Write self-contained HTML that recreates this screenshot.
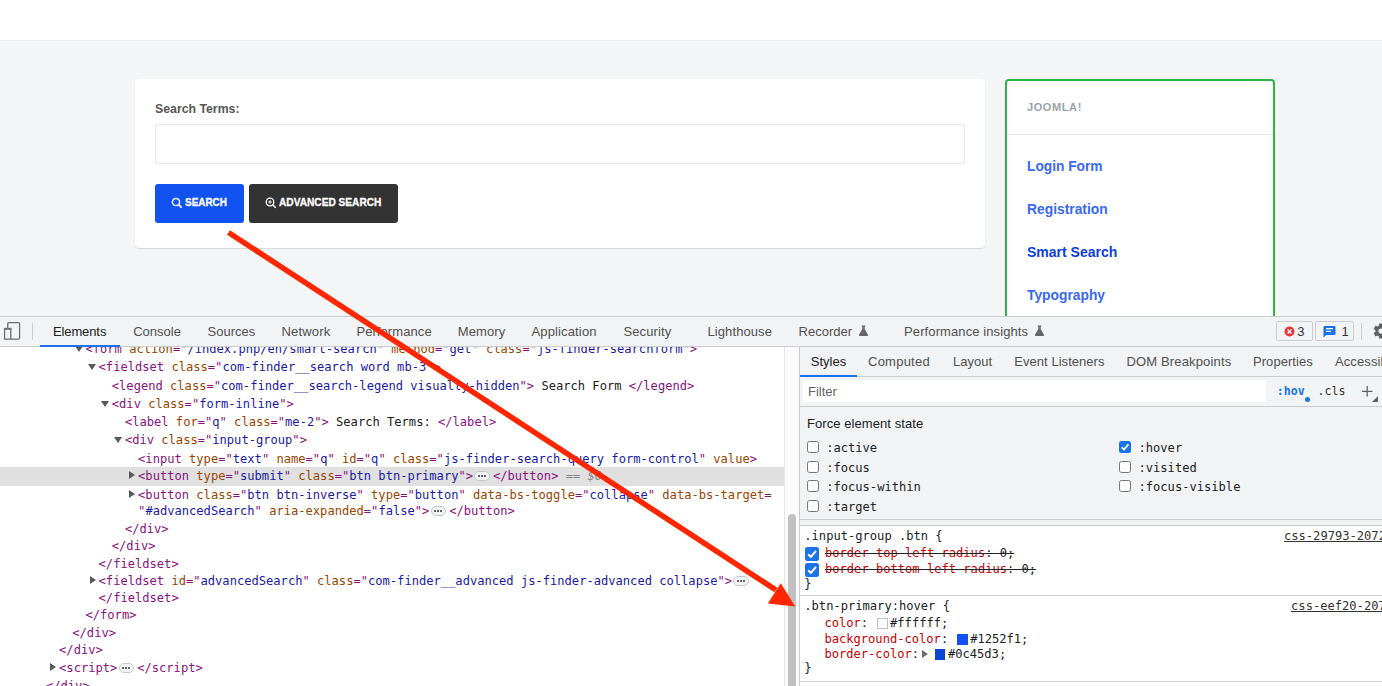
<!DOCTYPE html>
<html lang="en">
<head>
<meta charset="utf-8">
<title>Smart Search</title>
<style>
*{box-sizing:border-box;margin:0;padding:0}
html,body{width:1382px;height:686px;overflow:hidden;background:#f4f5f7;font-family:"Liberation Sans",Arial,sans-serif}
.abs{position:absolute}
#hdr{left:0;top:0;width:1382px;height:41px;background:#fff;border-bottom:1px solid #eceef0}
#card{left:135px;top:79px;width:850px;height:169px;background:#fff;border-radius:4px;box-shadow:0 1px 1px rgba(0,0,0,.12)}
#lbl{left:155px;top:101px;font-size:12.3px;font-weight:bold;color:#565656;line-height:16px;white-space:nowrap}
#inp{left:155px;top:124px;width:810px;height:40px;border:1px solid #e4e9ec;border-radius:3px;background:#fff}
.btn{height:39px;border-radius:3px;color:#fff;font-size:10.5px;font-weight:bold;line-height:39px;white-space:nowrap;-webkit-text-stroke:.3px #fff}
#b1{left:155px;top:184px;width:89px;background:#1252f1}
#b2{left:249px;top:184px;width:149px;background:#333}
#side{left:1005px;top:79px;width:270px;height:300px;background:#fff;border:2px solid #2fb344;border-radius:4px}
#sidehd{left:1007px;top:134px;width:266px;height:1px;background:#e8ebee}
#joomla{left:1027px;top:100px;font-size:11px;font-weight:bold;color:#9aa3aa;letter-spacing:.6px;line-height:14px}
.nav{left:1027px;font-size:15px;font-weight:bold;color:#3869ee;line-height:18px;white-space:nowrap;transform-origin:0 50%;transform:scaleX(.915)}
#dt{left:0;top:316px;width:1382px;height:370px;background:#fff}
#tabbar{left:0;top:316px;width:1382px;height:31px;background:#f1f3f4;border-top:1px solid #cbcdd1;border-bottom:1px solid #cbcdd1}
.tab{top:324px;font-size:13px;color:#505050;line-height:16px;white-space:nowrap}
.mono{font-family:"DejaVu Sans Mono","Liberation Mono",monospace;font-size:12.1px;line-height:16px;white-space:pre;color:#202124}
.t{color:#881280}.a{color:#994500}.v{color:#1a1aa6}.g{color:#80868b}
.ln{height:16px}
.tri{width:0;height:0;border-style:solid}
.trd{border-width:6px 4.2px 0 4.2px;border-color:#5a5a5a transparent transparent transparent}
.trr{border-width:4px 0 4px 6px;border-color:transparent transparent transparent #5a5a5a}
.dots{display:inline-block;width:15.5px;height:10px;border:1px solid #c4c7cc;border-radius:5px;background:#f1f3f4;vertical-align:-1px;margin:0 3.2px 0 1.2px;position:relative}
.dots i{position:absolute;top:3.2px;width:2px;height:2px;background:#5f6368}
#sel{left:0;top:467px;width:787px;height:19px;background:#e0e0e0}
#sbtrack{left:784px;top:347px;width:16px;height:339px;background:#fafafa;border-left:1px solid #e6e6e6}
#sbthumb{left:788px;top:514px;width:8px;height:180px;background:#c1c1c1;border-radius:4px 4px 0 0}
#split{left:799px;top:347px;width:1px;height:339px;background:#cbcdd1}
#stabs{left:800px;top:347px;width:582px;height:30px;background:#f1f3f4;border-bottom:1px solid #cbcdd1}
.stab{top:354px;font-size:13px;color:#505050;line-height:16px;white-space:nowrap}
#filterbar{left:800px;top:377px;width:582px;height:30px;background:#f1f3f4;border-bottom:1px solid #cbcdd1}
#filter{left:803px;top:380px;width:463px;height:22px;background:#fff}
#filtertxt{left:808px;top:384px;font-size:13px;color:#5f6368;line-height:16px}
#force{left:800px;top:407px;width:582px;height:113px;background:#f1f3f4;border-bottom:1px solid #cbcdd1}
#forcegap{left:800px;top:520px;width:582px;height:6px;background:#f1f3f4;border-bottom:1px solid #cbcdd1}
.cb{width:12px;height:12px;border:1px solid #767676;border-radius:2.5px;background:#fff}
.cbc{width:13px;height:13px;border-radius:2.5px;background:#1a73e8}
.sep{left:800px;width:582px;height:1px;background:#cbcdd1}
.p{color:#c80000}
.st{text-decoration:line-through;text-decoration-color:#202124}
.sw{display:inline-block;width:10.5px;height:10.5px;vertical-align:-1.5px;margin-right:2.5px;margin-left:1.7px}
.exp{display:inline-block;width:0;height:0;border-style:solid;border-width:4px 0 4px 6px;border-color:transparent transparent transparent #6e6e6e;margin:0 5.3px 0 2.9px;vertical-align:0}
.sww{border:1px solid #c0c0c0;background:#fff}
</style>
</head>
<body>
<div class="abs" id="hdr"></div>
<div class="abs" id="card"></div>
<div class="abs" id="lbl">Search Terms:</div>
<div class="abs" id="inp"></div>
<div class="abs btn" id="b1"><span class="abs" id="b1t" style="left:30px;top:-1px;transform-origin:0 50%;transform:scaleX(.946)">SEARCH</span></div>
<div class="abs btn" id="b2"><span class="abs" id="b2t" style="left:30px;top:-1px;transform-origin:0 50%;transform:scaleX(.966)">ADVANCED SEARCH</span></div>
<div class="abs" id="side"></div>
<div class="abs" id="sidehd"></div>
<div class="abs" id="joomla">JOOMLA!</div>
<div class="abs nav" id="n1" style="top:157px;transform:scaleX(0.916)">Login Form</div>
<div class="abs nav" id="n2" style="top:200px;transform:scaleX(0.922)">Registration</div>
<div class="abs nav" id="n3" style="top:243px;transform:scaleX(0.934);color:#0b40dc">Smart Search</div>
<div class="abs nav" id="n4" style="top:286px;transform:scaleX(0.921)">Typography</div>
<div class="abs" id="dt"></div>
<div class="abs" id="sel"></div>
<div class="abs mono ln" id="l0" style="left:85.5px;top:341.0px"><span class="t">&lt;form</span> <span class="a">action</span><span class="t">="</span><span class="v">/index.php/en/smart-search</span><span class="t">"</span> <span class="a">method</span><span class="t">="</span><span class="v">get</span><span class="t">"</span> <span class="a">class</span><span class="t">="</span><span class="v">js-finder-searchform</span><span class="t">"</span><span class="t">&gt;</span></div>
<div class="abs tri trd" style="left:74.8px;top:345.5px"></div>
<div class="abs mono ln" id="l1" style="left:98.6px;top:359.0px"><span class="t">&lt;fieldset</span> <span class="a">class</span><span class="t">="</span><span class="v">com-finder__search word mb-3</span><span class="t">"</span><span class="t">&gt;</span></div>
<div class="abs tri trd" style="left:87.9px;top:363.5px"></div>
<div class="abs mono ln" id="l2" style="left:111.8px;top:378.0px"><span class="t">&lt;legend</span> <span class="a">class</span><span class="t">="</span><span class="v">com-finder__search-legend visually-hidden</span><span class="t">"</span><span class="t">&gt;</span> Search Form <span class="t">&lt;/legend&gt;</span></div>
<div class="abs mono ln" id="l3" style="left:111.8px;top:396.0px"><span class="t">&lt;div</span> <span class="a">class</span><span class="t">="</span><span class="v">form-inline</span><span class="t">"</span><span class="t">&gt;</span></div>
<div class="abs tri trd" style="left:101.0px;top:400.5px"></div>
<div class="abs mono ln" id="l4" style="left:124.9px;top:414.0px"><span class="t">&lt;label</span> <span class="a">for</span><span class="t">="</span><span class="v">q</span><span class="t">"</span> <span class="a">class</span><span class="t">="</span><span class="v">me-2</span><span class="t">"</span><span class="t">&gt;</span> Search Terms: <span class="t">&lt;/label&gt;</span></div>
<div class="abs mono ln" id="l5" style="left:124.9px;top:432.0px"><span class="t">&lt;div</span> <span class="a">class</span><span class="t">="</span><span class="v">input-group</span><span class="t">"</span><span class="t">&gt;</span></div>
<div class="abs tri trd" style="left:114.2px;top:436.5px"></div>
<div class="abs mono ln" id="l6" style="left:138.1px;top:451.0px"><span class="t">&lt;input</span> <span class="a">type</span><span class="t">="</span><span class="v">text</span><span class="t">"</span> <span class="a">name</span><span class="t">="</span><span class="v">q</span><span class="t">"</span> <span class="a">id</span><span class="t">="</span><span class="v">q</span><span class="t">"</span> <span class="a">class</span><span class="t">="</span><span class="v">js-finder-search-query form-control</span><span class="t">"</span> <span class="a">value</span><span class="t">&gt;</span></div>
<div class="abs mono ln" id="l7" style="left:138.1px;top:468.0px"><span class="t">&lt;button</span> <span class="a">type</span><span class="t">="</span><span class="v">submit</span><span class="t">"</span> <span class="a">class</span><span class="t">="</span><span class="v">btn btn-primary</span><span class="t">"</span><span class="t">&gt;</span><span class="dots"><i style="left:2.7px"></i><i style="left:5.7px"></i><i style="left:8.7px"></i></span><span class="t">&lt;/button&gt;</span><span class="g"> == </span><span class="g" style="font-style:italic">$0</span></div>
<div class="abs tri trr" style="left:129.1px;top:470.7px"></div>
<div class="abs mono ln" id="l8" style="left:138.1px;top:487.0px"><span class="t">&lt;button</span> <span class="a">class</span><span class="t">="</span><span class="v">btn btn-inverse</span><span class="t">"</span> <span class="a">type</span><span class="t">="</span><span class="v">button</span><span class="t">"</span> <span class="a">data-bs-toggle</span><span class="t">="</span><span class="v">collapse</span><span class="t">"</span> <span class="a">data-bs-target</span><span class="t">=</span></div>
<div class="abs tri trr" style="left:129.1px;top:489.7px"></div>
<div class="abs mono ln" id="l9" style="left:138.1px;top:503.0px"><span class="t">"</span><span class="v">#advancedSearch</span><span class="t">"</span> <span class="a">aria-expanded</span><span class="t">="</span><span class="v">false</span><span class="t">"</span><span class="t">&gt;</span><span class="dots"><i style="left:2.7px"></i><i style="left:5.7px"></i><i style="left:8.7px"></i></span><span class="t">&lt;/button&gt;</span></div>
<div class="abs mono ln" id="l10" style="left:124.9px;top:521.0px"><span class="t">&lt;/div&gt;</span></div>
<div class="abs mono ln" id="l11" style="left:111.8px;top:538.0px"><span class="t">&lt;/div&gt;</span></div>
<div class="abs mono ln" id="l12" style="left:98.6px;top:556.0px"><span class="t">&lt;/fieldset&gt;</span></div>
<div class="abs mono ln" id="l13" style="left:98.6px;top:573.0px"><span class="t">&lt;fieldset</span> <span class="a">id</span><span class="t">="</span><span class="v">advancedSearch</span><span class="t">"</span> <span class="a">class</span><span class="t">="</span><span class="v">com-finder__advanced js-finder-advanced collapse</span><span class="t">"</span><span class="t">&gt;</span><span class="dots"><i style="left:2.7px"></i><i style="left:5.7px"></i><i style="left:8.7px"></i></span></div>
<div class="abs tri trr" style="left:89.6px;top:575.7px"></div>
<div class="abs mono ln" id="l14" style="left:98.6px;top:590.0px"><span class="t">&lt;/fieldset&gt;</span></div>
<div class="abs mono ln" id="l15" style="left:85.5px;top:607.0px"><span class="t">&lt;/form&gt;</span></div>
<div class="abs mono ln" id="l16" style="left:72.3px;top:625.0px"><span class="t">&lt;/div&gt;</span></div>
<div class="abs mono ln" id="l17" style="left:59.1px;top:642.0px"><span class="t">&lt;/div&gt;</span></div>
<div class="abs mono ln" id="l18" style="left:59.1px;top:660.0px"><span class="t">&lt;script&gt;</span><span class="dots"><i style="left:2.7px"></i><i style="left:5.7px"></i><i style="left:8.7px"></i></span><span class="t">&lt;/script&gt;</span></div>
<div class="abs tri trr" style="left:50.1px;top:662.7px"></div>
<div class="abs mono ln" id="l19" style="left:46.0px;top:678.0px"><span class="t">&lt;/div&gt;</span></div>
<div class="abs" id="sbtrack"></div><div class="abs" id="sbthumb"></div><div class="abs" id="split"></div>
<div class="abs" id="tabbar"></div>
<div class="abs tab" id="t0" style="left:52.9px;letter-spacing:-0.1px;color:#202124">Elements</div>
<div class="abs tab" id="t1" style="left:133.2px;letter-spacing:0px">Console</div>
<div class="abs tab" id="t2" style="left:207.6px;letter-spacing:0px">Sources</div>
<div class="abs tab" id="t3" style="left:281.5px;letter-spacing:0.17px">Network</div>
<div class="abs tab" id="t4" style="left:356.4px;letter-spacing:0.08px">Performance</div>
<div class="abs tab" id="t5" style="left:457.7px;letter-spacing:0.12px">Memory</div>
<div class="abs tab" id="t6" style="left:531.5px;letter-spacing:0.14px">Application</div>
<div class="abs tab" id="t7" style="left:623.4px;letter-spacing:0.12px">Security</div>
<div class="abs tab" id="t8" style="left:707.5px;letter-spacing:0.09px">Lighthouse</div>
<div class="abs tab" id="t9" style="left:798.6px;letter-spacing:0px">Recorder</div>
<div class="abs tab" id="t10" style="left:904.1px;letter-spacing:0.095px">Performance insights</div>
<div class="abs" style="left:40px;top:345px;width:80px;height:2px;background:#1a73e8"></div>
<div class="abs" id="stabs"></div>
<div class="abs stab" id="s0" style="left:810.8px;letter-spacing:0px;color:#202124">Styles</div>
<div class="abs stab" id="s1" style="left:868.0px;letter-spacing:0.24px">Computed</div>
<div class="abs stab" id="s2" style="left:952.9px;letter-spacing:0.06px">Layout</div>
<div class="abs stab" id="s3" style="left:1014.3px;letter-spacing:0.04px">Event Listeners</div>
<div class="abs stab" id="s4" style="left:1126.4px;letter-spacing:0.16px">DOM Breakpoints</div>
<div class="abs stab" id="s5" style="left:1253.0px;letter-spacing:0.05px">Properties</div>
<div class="abs stab" id="s6" style="left:1335.0px;letter-spacing:0.1px">Accessibility</div>
<div class="abs" style="left:800px;top:375px;width:57px;height:2px;background:#1a73e8"></div>
<div class="abs" id="filterbar"></div><div class="abs" id="filter"></div><div class="abs" id="filtertxt">Filter</div>
<div class="abs" id="force"></div><div class="abs" id="forcegap"></div>
<div class="abs" style="left:807px;top:415.5px;font-size:13px;color:#202124;line-height:16px;white-space:nowrap;letter-spacing:.07px" id="fes">Force element state</div>
<div class="abs cb" style="left:807px;top:441.0px"></div>
<div class="abs mono" style="left:826.2px;top:440px">:active</div>
<div class="abs cb" style="left:807px;top:460.5px"></div>
<div class="abs mono" style="left:826.2px;top:460px">:focus</div>
<div class="abs cb" style="left:807px;top:479.9px"></div>
<div class="abs mono" style="left:826.2px;top:479px">:focus-within</div>
<div class="abs cb" style="left:807px;top:499.5px"></div>
<div class="abs mono" style="left:826.2px;top:499px">:target</div>
<div class="abs cbc" style="left:1119px;top:441.0px;width:12px;height:12px"><svg class="abs" style="left:0;top:0" width="12" height="12" viewBox="0 0 13 13"><path d="M3 6.8 L5.4 9.2 L10.2 3.6" fill="none" stroke="#fff" stroke-width="1.9" stroke-linecap="butt" stroke-linejoin="miter"/></svg></div>
<div class="abs mono" style="left:1138.5px;top:440px">:hover</div>
<div class="abs cb" style="left:1119px;top:460.5px"></div>
<div class="abs mono" style="left:1138.5px;top:460px">:visited</div>
<div class="abs cb" style="left:1119px;top:479.9px"></div>
<div class="abs mono" style="left:1138.5px;top:479px">:focus-visible</div>
<div class="abs mono" style="left:1276.7px;top:383px;color:#1a73e8;font-weight:bold;font-size:11.6px" id="hov">:hov</div>
<div class="abs" style="left:1304.5px;top:396.5px;width:5px;height:5px;border-radius:50%;background:#1a73e8"></div>
<div class="abs mono" style="left:1317.6px;top:383px;color:#333;font-size:11.6px" id="cls">.cls</div>
<svg class="abs" style="left:1360px;top:384px" width="20" height="20" viewBox="0 0 20 20"><path d="M2 7.3h10.4M7.2 2v10.6" stroke="#5f6368" stroke-width="1.3" fill="none"/><path d="M18 12v6h-6z" fill="#5f6368"/></svg>
<div class="abs mono" style="left:804.3px;top:528px" id="r1">.input-group .btn {</div>
<div class="abs mono" style="left:1284px;top:528px;text-decoration:underline;color:#333" id="src1">css-29793-2072…</div>
<div class="abs cbc" style="left:804.8px;top:547px;width:14px;height:14px"><svg class="abs" style="left:0;top:0" width="14" height="14" viewBox="0 0 13 13"><path d="M3 6.8 L5.4 9.2 L10.2 3.6" fill="none" stroke="#fff" stroke-width="1.9" stroke-linecap="butt" stroke-linejoin="miter"/></svg></div>
<div class="abs mono st" style="left:825px;top:545px" id="p1"><span class="p">border-top-left-radius</span>: 0;</div>
<div class="abs cbc" style="left:804.8px;top:562.8px;width:14px;height:14px"><svg class="abs" style="left:0;top:0" width="14" height="14" viewBox="0 0 13 13"><path d="M3 6.8 L5.4 9.2 L10.2 3.6" fill="none" stroke="#fff" stroke-width="1.9" stroke-linecap="butt" stroke-linejoin="miter"/></svg></div>
<div class="abs mono st" style="left:825px;top:561px" id="p2"><span class="p">border-bottom-left-radius</span>: 0;</div>
<div class="abs mono" style="left:804.3px;top:576px">}</div>
<div class="abs sep" style="top:595px"></div>
<div class="abs mono" style="left:804.3px;top:598px" id="r2">.btn-primary:hover {</div>
<div class="abs mono" style="left:1291.1px;top:598px;text-decoration:underline;color:#333" id="src2">css-eef20-2072…</div>
<div class="abs mono" style="left:824.4px;top:615px" id="q1"><span class="p">color</span>: <span class="sw sww"></span>#ffffff;</div>
<div class="abs mono" style="left:824.4px;top:631px" id="q2"><span class="p">background-color</span>: <span class="sw" style="background:#1252f1"></span>#1252f1;</div>
<div class="abs mono" style="left:824.4px;top:646px" id="q3"><span class="p">border-color</span>:<span class="exp"></span><span class="sw" style="background:#0c45d3"></span>#0c45d3;</div>
<div class="abs mono" style="left:804.3px;top:660px">}</div>
<div class="abs sep" style="top:681px"></div>
<div class="abs mono" style="left:804.3px;top:684px" id="r3">.btn:not(:disabled):not(.disabled) {</div>
<div class="abs mono" style="left:1291.1px;top:684px;text-decoration:underline;color:#333">css-eef20-2072…</div>
<div class="abs" style="left:1276px;top:321px;width:37px;height:20px;border:1px solid #cbcdd1;border-radius:2px"></div>
<svg class="abs" style="left:1283.5px;top:326px" width="11" height="11" viewBox="0 0 11 11"><circle cx="5.5" cy="5.5" r="5" fill="#e8353a"/><path d="M3.6 3.6l3.8 3.8M7.4 3.6l-3.8 3.8" stroke="#fff" stroke-width="1.4"/></svg>
<div class="abs" style="left:1297.2px;top:323.5px;font-size:13px;color:#333;line-height:16px">3</div>
<div class="abs" style="left:1315px;top:321px;width:39px;height:20px;border:1px solid #cbcdd1;border-radius:2px"></div>
<svg class="abs" style="left:1323px;top:325px" width="13" height="13" viewBox="0 0 13 13"><path d="M1.5 1h10a1 1 0 0 1 1 1v7a1 1 0 0 1 -1 1h-8l-3 2.5v-10.5a1 1 0 0 1 1 -1z" fill="#1a73e8"/><path d="M3 3.7h7M3 6.3h5" stroke="#fff" stroke-width="1.2"/></svg>
<div class="abs" style="left:1341.5px;top:323.5px;font-size:13px;color:#333;line-height:16px">1</div>
<div class="abs" style="left:1361px;top:323px;width:1px;height:17px;background:#cbcdd1"></div>
<svg class="abs" style="left:1372px;top:322px" width="18" height="18" viewBox="0 0 24 24"><path fill="#5f6368" d="M19.43 12.98c.04-.32.07-.64.07-.98s-.03-.66-.07-.98l2.11-1.65c.19-.15.24-.42.12-.64l-2-3.46c-.12-.22-.39-.3-.61-.22l-2.49 1c-.52-.4-1.08-.73-1.69-.98l-.38-2.65C14.46 2.18 14.25 2 14 2h-4c-.25 0-.46.18-.49.42l-.38 2.65c-.61.25-1.17.59-1.69.98l-2.49-1c-.23-.09-.49 0-.61.22l-2 3.46c-.13.22-.07.49.12.64l2.11 1.65c-.04.32-.07.65-.07.98s.03.66.07.98l-2.11 1.65c-.19.15-.24.42-.12.64l2 3.46c.12.22.39.3.61.22l2.49-1c.52.4 1.08.73 1.69.98l.38 2.65c.03.24.24.42.49.42h4c.25 0 .46-.18.49-.42l.38-2.65c.61-.25 1.17-.59 1.69-.98l2.49 1c.23.09.49 0 .61-.22l2-3.46c.12-.22.07-.49-.12-.64l-2.11-1.65zM12 15.5c-1.93 0-3.500-1.570-3.500-3.500s1.570-3.500 3.500-3.500 3.500 1.570 3.500 3.500-1.570 3.500-3.500 3.500z"/></svg>
<svg class="abs" style="left:0;top:316px" width="30" height="30" viewBox="0 0 30 30"><path d="M7.700 12.200v-4.300a1.300 1.300 0 0 1 1.300-1.300h9.300a1.300 1.300 0 0 1 1.300 1.300v13.900a1.300 1.300 0 0 1 -1.300 1.300h-7.300" fill="none" stroke="#6e6e6e" stroke-width="1.300"/><path d="M4.600 12.900h6.200v10.200h-6.200z" fill="none" stroke="#6e6e6e" stroke-width="1.300"/><path d="M4 12.700h7.400" stroke="#6e6e6e" stroke-width="1.700"/></svg>
<div class="abs" style="left:32px;top:323px;width:1px;height:17px;background:#cbcdd1"></div>
<svg class="abs" style="left:858px;top:325px" width="11" height="11.500" viewBox="0 0 11 11.5"><path d="M3.6 0.5h3.8v1h-.7v2.6l3.3 5.6a.8.8 0 0 1 -.7 1.2h-7.600a.8.8 0 0 1 -.7-1.2l3.300-5.600v-2.600h-.7z" fill="#666"/></svg>
<svg class="abs" style="left:1034px;top:325px" width="11" height="11.500" viewBox="0 0 11 11.5"><path d="M3.6 0.5h3.8v1h-.7v2.6l3.3 5.6a.8.8 0 0 1 -.7 1.2h-7.600a.8.8 0 0 1 -.7-1.2l3.300-5.600v-2.600h-.7z" fill="#666"/></svg>
<svg class="abs" style="left:171px;top:196.500px" width="12" height="12" viewBox="0 0 12 12"><circle cx="5" cy="5" r="3.600" fill="none" stroke="#fff" stroke-width="1.500"/><path d="M7.600 7.600l3 3" stroke="#fff" stroke-width="1.600"/></svg>
<svg class="abs" style="left:265px;top:196.500px" width="12" height="12" viewBox="0 0 12 12"><circle cx="5" cy="5" r="3.800" fill="none" stroke="#fff" stroke-width="1.300"/><path d="M7.700 7.700l3 3" stroke="#fff" stroke-width="1.600"/><path d="M3.200 5h3.600M5 3.200v3.600" stroke="#fff" stroke-width="1"/></svg>
<svg class="abs" style="left:0;top:0" width="1382" height="686" viewBox="0 0 1382 686"><path d="M228.500 232.500L776 590" stroke="#ff2600" stroke-width="5.500" fill="none"/><path d="M795.300 606.500L780.800 583.300L767.800 603.600z" fill="#ff2600"/></svg>
</body>
</html>
